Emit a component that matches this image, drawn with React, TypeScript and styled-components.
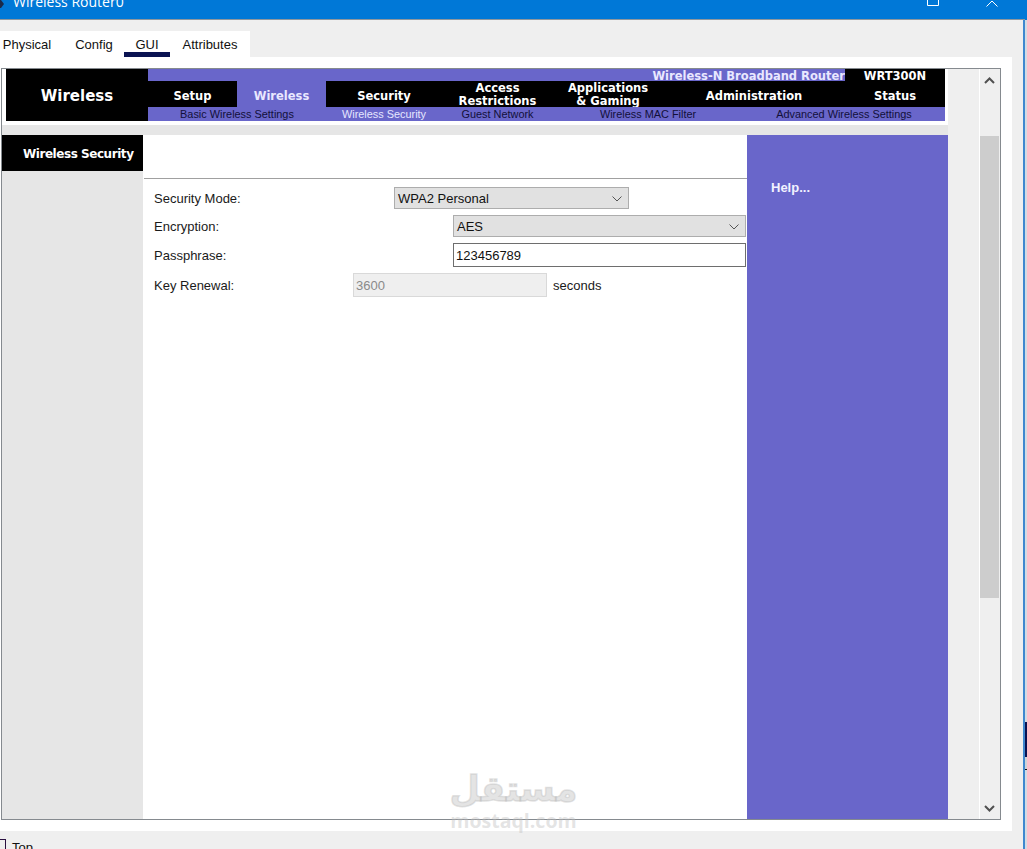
import React from "react";
import styled, { createGlobalStyle } from "styled-components";

const Global = createGlobalStyle`
  html, body { margin: 0; padding: 0; height: 100%; overflow: hidden; background: #efefef; }
  #root { height: 849px; }
  * { box-sizing: border-box; }
`;

const Screen = styled.div`
  position: relative;
  width: 1027px;
  height: 849px;
  overflow: hidden;
  display: flex;
  background: #fff;
`;
const Win = styled.div`
  width: 1025px;
  height: 849px;
  flex: none;
  display: flex;
  flex-direction: column;
  background: #efefef;
  border-right: 2px solid #3f88cf;
  font-family: "Liberation Sans", Arial, sans-serif;
`;
const Strip = styled.div`
  flex: 1;
  display: flex;
  flex-direction: column;
`;
const StripPart = styled.div<{ $h?: number; $c: string }>`
  ${(p) => (p.$h ? `height: ${p.$h}px; flex: none;` : "flex: 1;")}
  background: ${(p) => p.$c};
`;
const TitleBar = styled.div`
  height: 20px;
  flex: none;
  background: #0078d7;
  border-bottom: 1px solid #8f979e;
  display: flex;
  justify-content: space-between;
  overflow: hidden;
  margin-right: -2px;
`;
const TitleLeft = styled.div`
  display: flex;
  align-items: flex-start;
`;
const AppIcon = styled.svg`
  width: 4px;
  height: 8px;
  display: block;
  flex: none;
`;
const TitleText = styled.div`
  font: 14px/20px "Open Sans", "Liberation Sans", sans-serif;
  color: #fff;
  margin: -8px 0 0 9px;
  white-space: nowrap;
`;
const WinButtons = styled.div`
  display: flex;
  gap: 47px;
  align-items: flex-start;
  padding-right: 27px;
`;
const MaxIcon = styled.svg`
  width: 12px;
  height: 6px;
  display: block;
`;
const CloseIcon = styled.svg`
  width: 12px;
  height: 7px;
  display: block;
`;
const TabsStrip = styled.div`
  height: 37px;
  flex: none;
  padding-top: 11px;
  display: flex;
`;
const Tabs = styled.div`
  width: 250px;
  height: 26px;
  background: #fff;
  display: flex;
`;
const Tab = styled.div<{ $w: number; $ml?: number; $active?: boolean }>`
  width: ${(p) => p.$w}px;
  margin-left: ${(p) => p.$ml ?? 0}px;
  height: 26px;
  font-size: 13px;
  line-height: 28px;
  color: #111;
  text-align: center;
  white-space: nowrap;
  border-bottom: ${(p) => (p.$active ? "5px solid #0a1352" : "none")};
`;
const Panel = styled.div`
  width: 1012px;
  height: 774px;
  flex: none;
  background: #fff;
  padding: 11px 0 0 1px;
`;
const Frame = styled.div`
  width: 1000px;
  height: 752px;
  border: 1px solid #858a8f;
  display: flex;
  background: #efefef;
`;
const Page = styled.div`
  width: 946px;
  flex: none;
  display: flex;
  flex-direction: column;
`;
const Gutter = styled.div`
  flex: 1;
  background: #efefef;
  border-right: 1px solid #fff;
`;
const Scrollbar = styled.div`
  width: 20px;
  flex: none;
  background: #efefef;
  padding-right: 1px;
  display: flex;
  flex-direction: column;
`;
const ScrollBtn = styled.div`
  height: 67px;
  display: flex;
  justify-content: center;
  align-items: flex-start;
  padding-top: 8px;
`;
const ScrollBtnEnd = styled.div`
  flex: 1;
  display: flex;
  justify-content: center;
  align-items: flex-end;
  padding-bottom: 7px;
`;
const Thumb = styled.div`
  height: 462px;
  background: #cdcdcd;
`;
const Arrow = styled.svg`
  width: 11px;
  height: 7px;
  display: block;
`;
const Banner = styled.div`
  background: #fff;
  height: 56px;
  flex: none;
  padding-left: 4px;
  display: flex;
`;
const Brand = styled.div`
  width: 142px;
  height: 52px;
  background: #000;
  color: #fff;
  font: bold 15px/54px "DejaVu Sans", Verdana, sans-serif;
  text-align: center;
`;
const Nav = styled.div`
  width: 797px;
  height: 52px;
  display: flex;
  flex-direction: column;
`;
const NavTop = styled.div`
  height: 12px;
  display: flex;
  background: #6966ca;
`;
const Product = styled.div`
  width: 697px;
  text-align: right;
  color: #e9e8ff;
  font: bold 11.5px/14px "DejaVu Sans", Verdana, sans-serif;
  white-space: nowrap;
`;
const Model = styled.div`
  flex: 1;
  background: #000;
  color: #fff;
  text-align: center;
  font: bold 11.5px/14px "DejaVu Sans", Verdana, sans-serif;
`;
const NavMain = styled.div`
  height: 26px;
  background: #000;
  display: flex;
`;
const NavItem = styled.div<{ $w: number; $active?: boolean; $double?: boolean }>`
  width: ${(p) => p.$w}px;
  height: 26px;
  padding-top: ${(p) => (p.$double ? 1 : 9)}px;
  background: ${(p) => (p.$active ? "#6966ca" : "#000")};
  color: ${(p) => (p.$active ? "#e9e8ff" : "#fff")};
  font: bold 11.5px/13px "DejaVu Sans", Verdana, sans-serif;
  text-align: center;
`;
const NavSub = styled.div`
  height: 14px;
  background: #6966ca;
  display: flex;
`;
const SubItem = styled.div<{ $w: number; $active?: boolean }>`
  width: ${(p) => p.$w}px;
  color: ${(p) => (p.$active ? "#e6e6ff" : "#12103a")};
  font: 10.9px/15px "Liberation Sans", Arial, sans-serif;
  text-align: center;
  white-space: nowrap;
`;
const Spacer = styled.div`
  height: 10px;
  flex: none;
  background: #e6e6e6;
`;
const Body = styled.div`
  flex: 1;
  display: flex;
  min-height: 0;
`;
const Side = styled.div`
  width: 141px;
  flex: none;
  background: #e6e6e6;
`;
const SideHead = styled.div`
  height: 36px;
  background: #000;
  color: #fff;
  font: bold 12px/39px "DejaVu Sans", Verdana, sans-serif;
  letter-spacing: -0.45px;
  padding-left: 21px;
  white-space: nowrap;
`;
const Main = styled.div`
  width: 604px;
  flex: none;
  background: #fff;
  padding-left: 1px;
`;
const MainHead = styled.div`
  height: 44px;
  border-bottom: 1px solid #a0a0a0;
`;
const Form = styled.div`
  padding: 8px 0 0 10px;
  display: flex;
  flex-direction: column;
  gap: 6px;
`;
const Row = styled.div<{ $h: number }>`
  display: flex;
  align-items: center;
  height: ${(p) => p.$h}px;
`;
const Label = styled.div<{ $w: number }>`
  width: ${(p) => p.$w}px;
  flex: none;
  padding-top: 1px;
  font: 13px/16px "Liberation Sans", Arial, sans-serif;
  color: #1a1a1a;
`;
const Select = styled.div<{ $w: number }>`
  width: ${(p) => p.$w}px;
  height: 100%;
  flex: none;
  background: #e1e1e1;
  border: 1px solid #adadad;
  display: flex;
  align-items: center;
  justify-content: space-between;
  padding: 1px 4px 0 3px;
  font: 13px/16px "Liberation Sans", Arial, sans-serif;
  color: #111;
`;
const Chevron = styled.svg`
  width: 10px;
  height: 6px;
  display: block;
  margin-right: 2px;
`;
const Input = styled.div<{ $w: number; $disabled?: boolean }>`
  width: ${(p) => p.$w}px;
  height: 100%;
  flex: none;
  background: ${(p) => (p.$disabled ? "#efefef" : "#fff")};
  border: 1px solid ${(p) => (p.$disabled ? "#d9d9d9" : "#6e6e6e")};
  color: ${(p) => (p.$disabled ? "#8a8a8a" : "#111")};
  display: flex;
  align-items: center;
  padding: 1px 0 0 2px;
  font: 13px/16px "Liberation Sans", Arial, sans-serif;
`;
const Unit = styled.div`
  margin-left: 6px;
  padding-top: 1px;
  font: 13px/16px "Liberation Sans", Arial, sans-serif;
  color: #1a1a1a;
`;
const HelpCol = styled.div`
  width: 201px;
  flex: none;
  background: #6966ca;
  color: #f2f2ff;
  font: bold 13px/16px "Liberation Sans", Arial, sans-serif;
  padding: 45px 0 0 24px;
`;
const Footer = styled.div`
  flex: 1;
  display: flex;
  align-items: flex-start;
  padding-top: 8px;
  gap: 6px;
`;
const Check = styled.div`
  width: 6px;
  height: 14px;
  border: 1px solid #2a1040;
  border-left: none;
  flex: none;
`;
const FootText = styled.div`
  font: 13px/16px "Liberation Sans", Arial, sans-serif;
  margin-top: 1px;
  color: #111;
`;
const Watermark = styled.div`
  position: absolute;
  left: 440px;
  top: 768px;
  width: 147px;
  color: rgba(190, 190, 190, 0.42);
  pointer-events: none;
  display: flex;
  flex-direction: column;
  align-items: center;
`;
const WmArabic = styled.div`
  font: bold 35px/43px "DejaVu Sans", sans-serif;
  -webkit-text-stroke: 1.5px rgba(190, 190, 190, 0.42);
`;
const WmLatin = styled.div`
  font: bold 19.5px/20px "Open Sans", "DejaVu Sans", sans-serif;
`;

const Down = () => (
  <Chevron viewBox="0 0 10 6"><path d="M.5.5 5 5 9.5.5" fill="none" stroke="#555" strokeWidth="1" /></Chevron>
);

const nav: { t: React.ReactNode; w: number; active?: boolean; double?: boolean }[] = [
  { t: "Setup", w: 89 },
  { t: "Wireless", w: 89, active: true },
  { t: "Security", w: 116 },
  { t: <>Access<br />Restrictions</>, w: 111, double: true },
  { t: <>Applications<br />&amp; Gaming</>, w: 110, double: true },
  { t: "Administration", w: 182 },
  { t: "Status", w: 100 },
];
const sub: [string, number, boolean?][] = [
  ["Basic Wireless Settings", 178],
  ["Wireless Security", 116, true],
  ["Guest Network", 111],
  ["Wireless MAC Filter", 190],
  ["Advanced Wireless Settings", 202],
];

export default function App() {
  return (
    <Screen>
      <Global />
      <Win>
        <TitleBar>
          <TitleLeft>
            <AppIcon viewBox="0 0 4 8"><path d="M0 0h1l3 4-3 4H0z" fill="#1b2a4a" /></AppIcon>
            <TitleText>Wireless Router0</TitleText>
          </TitleLeft>
          <WinButtons>
            <MaxIcon viewBox="0 0 12 6"><path d="M.5 0v5.5h11V0" fill="none" stroke="#fff" /></MaxIcon>
            <CloseIcon viewBox="0 0 12 7"><path d="M.5 6.5 6 1l5.5 5.5" fill="none" stroke="#fff" /></CloseIcon>
          </WinButtons>
        </TitleBar>
        <TabsStrip>
          <Tabs>
            <Tab $w={54}>Physical</Tab>
            <Tab $w={48} $ml={16}>Config</Tab>
            <Tab $w={46} $ml={6} $active>GUI</Tab>
            <Tab $w={80}>Attributes</Tab>
          </Tabs>
        </TabsStrip>
        <Panel>
          <Frame>
            <Page>
              <Banner>
                <Brand>Wireless</Brand>
                <Nav>
                  <NavTop>
                    <Product>Wireless-N Broadband Router</Product>
                    <Model>WRT300N</Model>
                  </NavTop>
                  <NavMain>
                    {nav.map((n, i) => (
                      <NavItem key={i} $w={n.w} $active={n.active} $double={n.double}>{n.t}</NavItem>
                    ))}
                  </NavMain>
                  <NavSub>
                    {sub.map(([t, w, a]) => (
                      <SubItem key={t} $w={w} $active={a}>{t}</SubItem>
                    ))}
                  </NavSub>
                </Nav>
              </Banner>
              <Spacer />
              <Body>
                <Side><SideHead>Wireless Security</SideHead></Side>
                <Main>
                  <MainHead />
                  <Form>
                    <Row $h={22}>
                      <Label $w={240}>Security Mode:</Label>
                      <Select $w={235}>WPA2 Personal<Down /></Select>
                    </Row>
                    <Row $h={22}>
                      <Label $w={299}>Encryption:</Label>
                      <Select $w={293}>AES<Down /></Select>
                    </Row>
                    <Row $h={24}>
                      <Label $w={299}>Passphrase:</Label>
                      <Input $w={293}>123456789</Input>
                    </Row>
                    <Row $h={24}>
                      <Label $w={199}>Key Renewal:</Label>
                      <Input $w={194} $disabled>3600</Input>
                      <Unit>seconds</Unit>
                    </Row>
                  </Form>
                </Main>
                <HelpCol>Help...</HelpCol>
              </Body>
            </Page>
            <Gutter />
            <Scrollbar>
              <ScrollBtn>
                <Arrow viewBox="0 0 11 7"><path d="M1 6 5.5 1.5 10 6" fill="none" stroke="#505050" strokeWidth="2" /></Arrow>
              </ScrollBtn>
              <Thumb />
              <ScrollBtnEnd>
                <Arrow viewBox="0 0 11 7"><path d="M1 1 5.5 5.5 10 1" fill="none" stroke="#505050" strokeWidth="2" /></Arrow>
              </ScrollBtnEnd>
            </Scrollbar>
          </Frame>
        </Panel>
        <Footer>
          <Check />
          <FootText>Top</FootText>
        </Footer>
      </Win>
      <Strip>
        <StripPart $h={20} $c="#0078d7" />
        <StripPart $h={702} $c="#d3dbe4" />
        <StripPart $h={35} $c="#0a1352" />
        <StripPart $h={12} $c="#cfd3d8" />
        <StripPart $h={1} $c="#111" />
        <StripPart $c="#d3dbe4" />
      </Strip>
      <Watermark>
        <WmArabic lang="ar" dir="rtl">مستقل</WmArabic>
        <WmLatin>mostaql.com</WmLatin>
      </Watermark>
    </Screen>
  );
}
